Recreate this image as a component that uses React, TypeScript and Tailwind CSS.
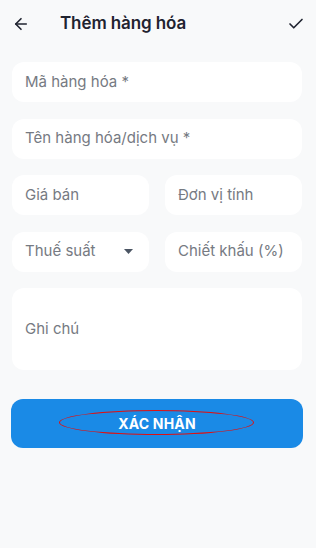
import { ArrowLeft, Check } from 'lucide-react'

function Field({ label, className = '' }: { label: string; className?: string }) {
  return (
    <div className={`flex items-center h-[40px] bg-white rounded-[12px] px-[13px] ${className}`}>
      <span className="text-[15px] text-[#767a82] truncate">{label}</span>
    </div>
  )
}

export default function App() {
  return (
    <div className="w-[319px] h-[548px] bg-white overflow-hidden" style={{ fontFamily: 'Inter, "Noto Sans", sans-serif' }}>
      <div className="w-[316px] h-full bg-[#f8f9fa] flex flex-col">
        {/* Header */}
        <div className="h-[44px] flex items-center pt-[3px] pl-[12px] pr-[11px]">
          <ArrowLeft className="w-[18px] h-[18px] text-[#1f2330]" strokeWidth={2.2} />
          <h1 className="ml-[30px] text-[17px] font-semibold text-[#1f2330] tracking-[-0.1px]">Thêm hàng hóa</h1>
          <Check className="ml-auto w-[18px] h-[18px] text-[#1f2330]" strokeWidth={2.2} />
        </div>

        {/* Form */}
        <div className="flex flex-col gap-[16.5px] pl-[12px] pr-[14px] pt-[18px]">
          <Field label="Mã hàng hóa *" />
          <Field label="Tên hàng hóa/dịch vụ *" />
          <div className="grid grid-cols-2 gap-[16px]">
            <Field label="Giá bán" />
            <Field label="Đơn vị tính" />
          </div>
          <div className="grid grid-cols-2 gap-[16px]">
            <div className="flex items-center h-[40px] bg-white rounded-[12px] pl-[13px] pr-[16px]">
              <span className="text-[15px] text-[#767a82]">Thuế suất</span>
              <svg className="ml-auto" width="9" height="5" viewBox="0 0 9 5">
                <path d="M0 0h9L4.5 5z" fill="#4b5563" />
              </svg>
            </div>
            <Field label="Chiết khấu (%)" />
          </div>
          <div className="flex items-center h-[82px] bg-white rounded-[12px] px-[13px]">
            <span className="text-[15px] text-[#767a82]">Ghi chú</span>
          </div>
        </div>

        <div className="pl-[11px] pr-[13px] pt-[29px]">
          <button className="relative w-full h-[49px] rounded-[12px] bg-[#1a8ae6] flex items-center justify-center">
            <span className="text-white text-[14px] font-bold tracking-[0.2px]">XÁC NHẬN</span>
            <span className="absolute left-[48px] top-[11px] w-[195px] h-[25px] rounded-[50%] border border-[#e01010]" />
          </button>
        </div>
      </div>
    </div>
  )
}
